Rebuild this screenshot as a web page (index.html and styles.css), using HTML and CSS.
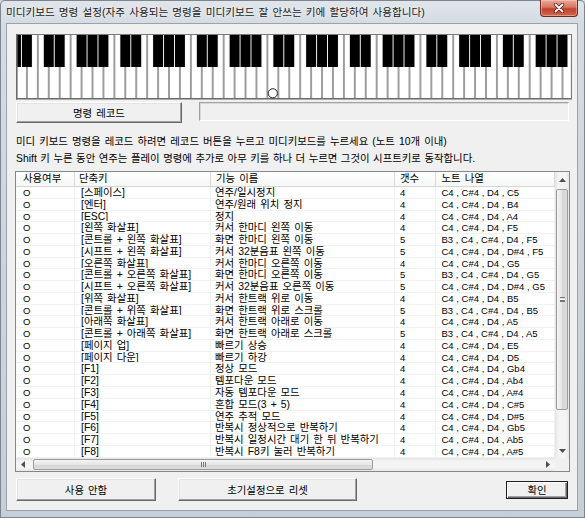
FILE: index.html
```html
<!DOCTYPE html>
<html lang="ko">
<head>
<meta charset="utf-8">
<title>미디키보드 명령 설정</title>
<link rel="stylesheet" href="styles.css">
</head>
<body>
<div class="window">
  <div class="titlebar">
    <span class="title">미디키보드 명령 설정(자주 사용되는 명령을 미디키보드 잘 안쓰는 키에 할당하여 사용합니다)</span>
    <div class="close">
      <svg width="12" height="10" viewBox="0 0 12 10"><path d="M2.5 1.5L9.5 8.5M9.5 1.5L2.5 8.5" stroke="#5a1e17" stroke-width="3.4" stroke-linecap="round"/><path d="M2.5 1.5L9.5 8.5M9.5 1.5L2.5 8.5" stroke="#fff" stroke-width="1.8" stroke-linecap="round"/></svg>
    </div>
  </div>
  <div class="client">
    <div class="piano">
      <svg class="keys" width="557" height="67" viewBox="15 33 557 67">
        <defs>
          <pattern id="oct" x="37.86" y="34" width="76.51" height="65" patternUnits="userSpaceOnUse">
            <rect width="76.51" height="65" fill="#fff"/>
            <path d="M0 0V65M10.93 0V65M21.86 0V65M32.79 0V65M43.72 0V65M54.65 0V65M65.58 0V65M76.51 0V65" stroke="#6b6b6b" stroke-width="1.3"/>
            <rect x="5.93" y="0" width="10" height="33" fill="#000"/>
            <rect x="16.86" y="0" width="10" height="33" fill="#000"/>
            <rect x="38.72" y="0" width="10" height="33" fill="#000"/>
            <rect x="49.65" y="0" width="10" height="33" fill="#000"/>
            <rect x="60.58" y="0" width="10" height="33" fill="#000"/>
          </pattern>
        </defs>
        <rect x="16" y="34" width="555" height="65" fill="url(#oct)"/>
        <path d="M16 34.5H571" stroke="#7a7a7a" stroke-width="1"/>
        <path d="M16 98.8H571" stroke="#6b6b6b" stroke-width="1.4"/>
        <path d="M16.8 34V99.5" stroke="#6b6b6b" stroke-width="1.6"/>
        <path d="M571.5 34V99.5" stroke="#7a7a7a" stroke-width="1.2"/>
        <circle cx="272.8" cy="93.3" r="4.6" fill="#fff" stroke="#222" stroke-width="1"/>
      </svg>
    </div>

    <div class="record-row">
      <div class="btn btn-record">명령 레코드</div>
      <div class="field"></div>
    </div>

    <div class="hints">
      <p>미디 키보드 명령을 레코드 하려면 레코드 버튼을 누르고 미디키보드를 누르세요 (노트 10개 이내)</p>
      <p class="hint-shift">Shift 키 누른 동안 연주는 플레이 명령에 추가로 아무 키를 하나 더 누르면 그것이 시프트키로 동작합니다.</p>
    </div>

    <div class="list">
      <div class="table">
        <div class="row head">
          <div class="h1">사용여부</div><div class="h2">단축키</div><div class="h3">기능 이름</div><div class="h4">갯수</div><div class="h5">노트 나열</div>
        </div>
        <div class="row"><div class="c1">O</div><div class="c2">[스페이스]</div><div class="c3">연주/일시정지</div><div class="c4">4</div><div class="c5">C4 , C#4 , D4 , C5</div></div>
        <div class="row"><div class="c1">O</div><div class="c2">[엔터]</div><div class="c3">연주/원래 위치 정지</div><div class="c4">4</div><div class="c5">C4 , C#4 , D4 , B4</div></div>
        <div class="row"><div class="c1">O</div><div class="c2">[ESC]</div><div class="c3">정지</div><div class="c4">4</div><div class="c5">C4 , C#4 , D4 , A4</div></div>
        <div class="row"><div class="c1">O</div><div class="c2">[왼쪽 화살표]</div><div class="c3">커서 한마디 왼쪽 이동</div><div class="c4">4</div><div class="c5">C4 , C#4 , D4 , F5</div></div>
        <div class="row"><div class="c1">O</div><div class="c2">[콘트롤 + 왼쪽 화살표]</div><div class="c3">화면 한마디 왼쪽 이동</div><div class="c4">5</div><div class="c5">B3 , C4 , C#4 , D4 , F5</div></div>
        <div class="row"><div class="c1">O</div><div class="c2">[시프트 + 왼쪽 화살표]</div><div class="c3">커서 32분음표 왼쪽 이동</div><div class="c4">5</div><div class="c5">C4 , C#4 , D4 , D#4 , F5</div></div>
        <div class="row"><div class="c1">O</div><div class="c2">[오른쪽 화살표]</div><div class="c3">커서 한마디 오른쪽 이동</div><div class="c4">4</div><div class="c5">C4 , C#4 , D4 , G5</div></div>
        <div class="row"><div class="c1">O</div><div class="c2">[콘트롤 + 오른쪽 화살표]</div><div class="c3">화면 한마디 오른쪽 이동</div><div class="c4">5</div><div class="c5">B3 , C4 , C#4 , D4 , G5</div></div>
        <div class="row"><div class="c1">O</div><div class="c2">[시프트 + 오른쪽 화살표]</div><div class="c3">커서 32분음표 오른쪽 이동</div><div class="c4">5</div><div class="c5">C4 , C#4 , D4 , D#4 , G5</div></div>
        <div class="row"><div class="c1">O</div><div class="c2">[위쪽 화살표]</div><div class="c3">커서 한트랙 위로 이동</div><div class="c4">4</div><div class="c5">C4 , C#4 , D4 , B5</div></div>
        <div class="row"><div class="c1">O</div><div class="c2">[콘트롤 + 위쪽 화살표]</div><div class="c3">화면 한트랙 위로 스크롤</div><div class="c4">5</div><div class="c5">B3 , C4 , C#4 , D4 , B5</div></div>
        <div class="row"><div class="c1">O</div><div class="c2">[아래쪽 화살표]</div><div class="c3">커서 한트랙 아래로 이동</div><div class="c4">4</div><div class="c5">C4 , C#4 , D4 , A5</div></div>
        <div class="row"><div class="c1">O</div><div class="c2">[콘트롤 + 아래쪽 화살표]</div><div class="c3">화면 한트랙 아래로 스크롤</div><div class="c4">5</div><div class="c5">B3 , C4 , C#4 , D4 , A5</div></div>
        <div class="row"><div class="c1">O</div><div class="c2">[페이지 업]</div><div class="c3">빠르기 상승</div><div class="c4">4</div><div class="c5">C4 , C#4 , D4 , E5</div></div>
        <div class="row"><div class="c1">O</div><div class="c2">[페이지 다운]</div><div class="c3">빠르기 하강</div><div class="c4">4</div><div class="c5">C4 , C#4 , D4 , D5</div></div>
        <div class="row"><div class="c1">O</div><div class="c2">[F1]</div><div class="c3">정상 모드</div><div class="c4">4</div><div class="c5">C4 , C#4 , D4 , Gb4</div></div>
        <div class="row"><div class="c1">O</div><div class="c2">[F2]</div><div class="c3">템포다운 모드</div><div class="c4">4</div><div class="c5">C4 , C#4 , D4 , Ab4</div></div>
        <div class="row"><div class="c1">O</div><div class="c2">[F3]</div><div class="c3">자동 템포다운 모드</div><div class="c4">4</div><div class="c5">C4 , C#4 , D4 , A#4</div></div>
        <div class="row"><div class="c1">O</div><div class="c2">[F4]</div><div class="c3">혼합 모드(3 + 5)</div><div class="c4">4</div><div class="c5">C4 , C#4 , D4 , C#5</div></div>
        <div class="row"><div class="c1">O</div><div class="c2">[F5]</div><div class="c3">연주 추적 모드</div><div class="c4">4</div><div class="c5">C4 , C#4 , D4 , D#5</div></div>
        <div class="row"><div class="c1">O</div><div class="c2">[F6]</div><div class="c3">반복시 정상적으로 반복하기</div><div class="c4">4</div><div class="c5">C4 , C#4 , D4 , Gb5</div></div>
        <div class="row"><div class="c1">O</div><div class="c2">[F7]</div><div class="c3">반복시 일정시간 대기 한 뒤 반복하기</div><div class="c4">4</div><div class="c5">C4 , C#4 , D4 , Ab5</div></div>
        <div class="row"><div class="c1">O</div><div class="c2">[F8]</div><div class="c3">반복시 F8키 눌러 반복하기</div><div class="c4">4</div><div class="c5">C4 , C#4 , D4 , A#5</div></div>
      </div>

      <div class="vscroll">
        <div class="sb-arrow"><svg width="7" height="4" viewBox="0 0 7 4"><path d="M0 4L3.5 0L7 4Z" fill="#505050"/></svg></div>
        <div class="vthumb"><span class="grip-v"></span></div>
        <div class="sb-fill"></div>
        <div class="sb-arrow"><svg width="7" height="4" viewBox="0 0 7 4"><path d="M0 0L3.5 4L7 0Z" fill="#505050"/></svg></div>
      </div>

      <div class="hscroll">
        <div class="sb-arrow h"><svg width="4" height="7" viewBox="0 0 4 7"><path d="M4 0L0 3.5L4 7Z" fill="#505050"/></svg></div>
        <div class="hthumb"><span class="grip-h"></span></div>
        <div class="sb-fill"></div>
        <div class="sb-arrow h"><svg width="4" height="7" viewBox="0 0 4 7"><path d="M0 0L4 3.5L0 7Z" fill="#505050"/></svg></div>
      </div>
      <div class="corner"></div>
    </div>

    <div class="buttons">
      <div class="btn btn-off">사용 안함</div>
      <div class="btn btn-reset">초기설정으로 리셋</div>
      <div class="btn btn-ok">확인</div>
    </div>
  </div>
</div>
</body>
</html>
```

FILE: styles.css
```css
* {
  box-sizing: border-box;
}

body {
  margin: 0;
  background: #cfd6de;
}

.window {
  width: 585px;
  height: 518px;
  display: flex;
  flex-direction: column;
  overflow: hidden;
  background: linear-gradient(180deg, #e1e6eb 0, #d5dbe2 24px, #c6ced7 100%);
  box-shadow: inset 0 0 0 1px #7d8690;
  border-radius: 5px 5px 0 0;
  font-family: "Liberation Sans", "Noto Sans CJK KR", sans-serif;
  font-size: 10.4px;
  word-spacing: 1.2px;
  color: #000;
}

/* title bar */
.titlebar {
  height: 24px;
  flex: none;
  display: flex;
  align-items: flex-start;
}

.title {
  margin: 6px 0 0 6px;
  font-size: 10.6px;
  line-height: 13px;
  color: #1c1c1c;
  white-space: nowrap;
  text-shadow: 0 0 5px rgba(255, 255, 255, 0.95);
}

.close {
  margin-left: auto;
  margin-right: 7px;
  width: 38px;
  height: 17px;
  border: 1px solid #6d2a22;
  border-top: none;
  border-radius: 0 0 4px 4px;
  background: linear-gradient(180deg, #eaa99a 0, #d87662 45%, #c2402d 55%, #d0674f 100%);
  box-shadow: inset 0 0 0 1px rgba(255, 210, 200, 0.45);
  display: flex;
  align-items: center;
  justify-content: center;
}

.close svg {
  display: block;
}

/* client area */
.client {
  flex: 1;
  margin: 0 8px 8px 7px;
  padding: 0 6px 0 8px;
  background: #f0f0f0;
  outline: 1px solid #9aa3ac;
  display: flex;
  flex-direction: column;
}

.piano {
  margin-top: 9px;
  width: 557px;
  height: 67px;
  flex: none;
}

.keys {
  display: block;
}

.record-row {
  margin-top: 2px;
  height: 21px;
  flex: none;
  display: flex;
  align-items: flex-start;
}

.btn {
  background: #f0f0f0;
  border: 1px solid;
  border-color: #fff #696969 #696969 #fff;
  box-shadow: inset -1px -1px 0 #a0a0a0, inset 1px 1px 0 #e3e3e3;
  display: flex;
  align-items: center;
  justify-content: center;
  white-space: nowrap;
  flex: none;
}

.btn-record {
  margin-left: 1px;
  width: 166px;
  height: 21px;
}

.field {
  margin-left: 17px;
  width: 370px;
  height: 19px;
  border: 1px solid;
  border-color: #a0a0a0 #fff #fff #a0a0a0;
  box-shadow: inset 1px 1px 0 #d8d8d8;
}

.hints {
  margin-top: 10px;
  padding-left: 1px;
  line-height: 17px;
  flex: none;
}

.hints p {
  margin: 0;
  white-space: nowrap;
}

.hints .hint-shift {
  word-spacing: 0.65px;
}

/* list view */
.list {
  margin-top: 4px;
  width: 555px;
  height: 301px;
  flex: none;
  border: 1px solid #828790;
  background: #fff;
  display: grid;
  grid-template-columns: 539px 14px;
  grid-template-rows: 286px 13px;
}

.table {
  overflow: hidden;
}

.row {
  display: grid;
  grid-template-columns: 59px 136px 184px 41px 119px;
  height: 11.77px;
  line-height: 11px;
  border-bottom: 1px solid #f1f1f1;
}

.row > div {
  white-space: nowrap;
  overflow: hidden;
  border-right: 1px solid #f1f1f1;
}

.row.head {
  height: 15px;
  line-height: 14px;
  background: linear-gradient(180deg, #ffffff 0, #f6f7f8 100%);
  border-bottom: 1px solid #d6d6d6;
}

.row.head > div {
  border-right: 1px solid #d9d9d9;
}

.h1, .c1 { padding-left: 7px; }
.h2 { padding-left: 4px; }
.c2 { padding-left: 6px; }
.h3 { padding-left: 5px; }
.c3 { padding-left: 4px; }
.h4, .c4 { padding-left: 5px; }
.h5, .c5 { padding-left: 5.5px; }

.c1, .c4, .c5 {
  font-size: 9.5px;
  word-spacing: 0;
}

/* scrollbars */
.vscroll {
  display: flex;
  flex-direction: column;
  background: linear-gradient(90deg, #e4e4e4 0, #f4f4f4 25%, #f4f4f4 75%, #e8e8e8 100%);
}

.sb-arrow {
  height: 15px;
  flex: none;
  display: flex;
  align-items: center;
  justify-content: center;
}

.sb-arrow svg {
  display: block;
}

.vthumb {
  margin: 2px 1px 0 1px;
  height: 221px;
  flex: none;
  border: 1px solid #9b9b9b;
  border-radius: 2px;
  background: linear-gradient(90deg, #f4f4f4 0, #e6e6e6 50%, #d6d6d6 51%, #dcdcdc 100%);
  display: flex;
  align-items: center;
  justify-content: center;
}

.grip-v {
  width: 5px;
  height: 5px;
  border-top: 1px solid #777;
  border-bottom: 1px solid #777;
  background: linear-gradient(#fff 0, #fff 1px, #777 1px, #777 2px, #fff 2px);
  background-size: 100% 3px;
  background-repeat: no-repeat;
  background-position: 0 1px;
}

.sb-fill {
  flex: 1;
}

.hscroll {
  display: flex;
  background: linear-gradient(180deg, #e4e4e4 0, #f4f4f4 25%, #f4f4f4 75%, #e8e8e8 100%);
}

.sb-arrow.h {
  height: auto;
  width: 14px;
}

.hthumb {
  margin: 1px 0 1px 3px;
  width: 340px;
  flex: none;
  border: 1px solid #9b9b9b;
  border-radius: 2px;
  background: linear-gradient(180deg, #f4f4f4 0, #e6e6e6 50%, #d6d6d6 51%, #dcdcdc 100%);
  display: flex;
  align-items: center;
  justify-content: center;
}

.grip-h {
  width: 5px;
  height: 5px;
  border-left: 1px solid #777;
  border-right: 1px solid #777;
  background: linear-gradient(90deg, #777 0, #777 1px, transparent 1px);
  background-size: 1px 100%;
  background-repeat: no-repeat;
  background-position: 1px 0;
}

.corner {
  background: #f0f0f0;
}

/* bottom buttons */
.buttons {
  margin-top: 6px;
  height: 23px;
  flex: none;
  display: flex;
  align-items: center;
}

.btn-off {
  margin-left: 1px;
  width: 140px;
  height: 23px;
}

.btn-reset {
  margin-left: 22px;
  width: 179px;
  height: 23px;
}

.btn-ok {
  margin-left: auto;
  margin-right: 3px;
  width: 62px;
  height: 18px;
  border: 1px solid #1e1e1e;
  box-shadow: inset 1px 1px 0 #fff, inset -1px -1px 0 #696969, inset -2px -2px 0 #a0a0a0;
}
```
